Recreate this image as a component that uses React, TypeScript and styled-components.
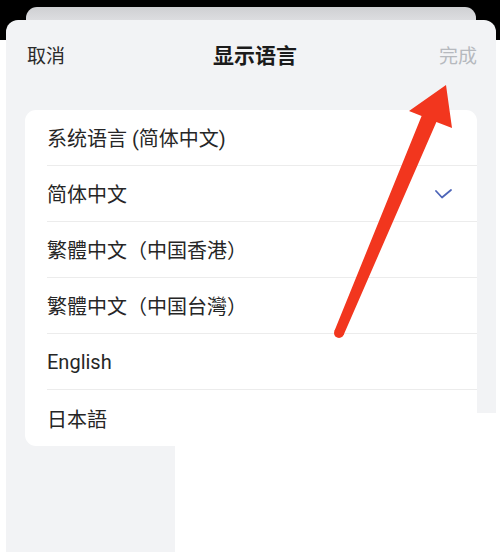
import styled, { createGlobalStyle } from 'styled-components';

const GlobalStyle = createGlobalStyle`
  html,
  body {
    margin: 0;
    padding: 0;
    background: #fff;
  }

  body {
    font-family: Roboto, 'Noto Sans CJK SC', 'Noto Sans', sans-serif;
  }
`;

const Frame = styled.div`
  position: relative;
  display: flex;
  flex-direction: column;
  width: 500px;
  height: 552px;
  overflow: hidden;
  background: linear-gradient(#000 0, #000 40px, #fff 40px);
`;

const BackCard = styled.div`
  height: 13px;
  margin: 7px 24px 0 26px;
  border-radius: 11px 11px 0 0;
  background: linear-gradient(#cfd0d3, #dcdde0);
`;

const Sheet = styled.section`
  position: relative;
  flex: 1;
  display: flex;
  flex-direction: column;
  margin: 0 4px 0 6px;
  border-radius: 12px 12px 0 0;
  background: #f2f3f5;
`;

const NavBar = styled.header`
  display: grid;
  grid-template-columns: 1fr auto 1fr;
  align-items: center;
  height: 68px;
  padding: 0 19px 0 21px;
  margin-bottom: 22px;
`;

const NavButton = styled.span<{ $muted?: boolean; $end?: boolean }>`
  justify-self: ${(p) => (p.$end ? 'end' : 'start')};
  font-size: 19px;
  color: ${(p) => (p.$muted ? '#b6b9be' : '#2a2a2a')};
`;

const Title = styled.h1`
  margin: 0;
  font-size: 21px;
  font-weight: 700;
  color: #1b1b1b;
  transform: translateX(3px);
`;

const List = styled.ul`
  position: relative;
  z-index: 1;
  list-style: none;
  margin: 0 19px 0 19px;
  padding: 0 0 0 22px;
  border-radius: 11px;
  background: #fff;
`;

const Row = styled.li`
  display: flex;
  align-items: center;
  justify-content: space-between;
  box-sizing: border-box;
  height: 56px;
  padding-right: 25px;
  font-size: 20px;
  color: #262626;
  border-bottom: 1px solid #ececec;

  &:last-child {
    border-bottom: none;
  }
`;

const Check = styled.svg`
  width: 17px;
  height: 10px;
`;

// white area where the screenshot was cut off
const CutOff = styled.div`
  position: absolute;
  left: 169px;
  top: 393px;
  right: 0;
  bottom: 0;
  background: #fff;
`;

const Markup = styled.svg`
  position: absolute;
  top: 0;
  left: 0;
  z-index: 2;
  pointer-events: none;
`;

const languages = [
  { label: '系统语言 (简体中文)' },
  { label: '简体中文', selected: true },
  { label: '繁體中文（中国香港）' },
  { label: '繁體中文（中国台灣）' },
  { label: 'English' },
  { label: '日本語' },
];

const App = () => {
  return (
    <>
      <GlobalStyle />
      <Frame>
        <BackCard />
        <Sheet>
          <NavBar>
            <NavButton>取消</NavButton>
            <Title>显示语言</Title>
            <NavButton $muted $end>
              完成
            </NavButton>
          </NavBar>
          <List>
            {languages.map((lang) => (
              <Row key={lang.label}>
                {lang.label}
                {lang.selected && (
                  <Check viewBox="0 0 17 10">
                    <polyline
                      points="1,2 7,8.5 16,1"
                      fill="none"
                      stroke="#4d65b8"
                      strokeWidth="1.8"
                      strokeLinecap="round"
                      strokeLinejoin="round"
                    />
                  </Check>
                )}
              </Row>
            ))}
          </List>
          <CutOff />
        </Sheet>
        <Markup width="500" height="552" viewBox="0 0 500 552">
          <polygon
            points="446,85 452,128 436.4,122.1 343.6,334.9 334.4,331.1 421.6,115.9 409,111"
            fill="#f2361e"
          />
          <circle cx="339" cy="333" r="5" fill="#f2361e" />
        </Markup>
      </Frame>
    </>
  );
};

export default App;
